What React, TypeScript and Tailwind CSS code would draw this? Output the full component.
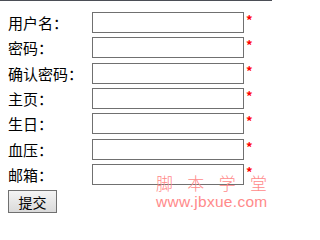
import React from "react";

const rows: { label: string; h: string }[] = [
  { label: "用户名：", h: "h-[25px]" },
  { label: "密码：", h: "h-[26px]" },
  { label: "确认密码：", h: "h-[25px]" },
  { label: "主页：", h: "h-[25px]" },
  { label: "生日：", h: "h-[26px]" },
  { label: "血压：", h: "h-[25px]" },
  { label: "邮箱：", h: "h-[25px]" },
];

export default function App() {
  return (
    <div
      className="relative w-[272px] h-[215px] overflow-hidden bg-white text-black"
      style={{ fontFamily: '"Noto Sans CJK SC", "Liberation Sans", sans-serif' }}
    >
      <div className="h-px w-full bg-[#4b4e56]" />
      <div className="pt-[11px] pl-2 flex flex-col">
        {rows.map((r) => (
          <div key={r.label} className={`flex items-start ${r.h}`}>
            <div className="w-[84px] h-[21px] flex items-center text-[15px] leading-none">
              {r.label}
            </div>
            <div className="w-[152px] h-[21px] border border-[#707070] bg-white" />
            <span className="ml-[2px] mt-[1px] text-[13px] leading-none font-bold text-[#ff0000]">
              *
            </span>
          </div>
        ))}
        <button className="mt-[1px] w-[49px] h-[23px] border border-[#707070] bg-gradient-to-b from-[#f4f4f4] to-[#dadada] text-[14px] leading-none flex items-center justify-center">
          提交
        </button>
      </div>
      <div className="absolute left-[156px] top-[174px] text-[#ff8a8a] leading-none pointer-events-none">
        <div className="flex justify-between w-[111px] text-[17px] font-light">
          <span>脚</span>
          <span>本</span>
          <span>学</span>
          <span>堂</span>
        </div>
        <div
          className="mt-[3px] text-[15.5px] tracking-[0.3px]"
          style={{ fontFamily: '"Liberation Sans", sans-serif' }}
        >
          www.jbxue.com
        </div>
      </div>
    </div>
  );
}
